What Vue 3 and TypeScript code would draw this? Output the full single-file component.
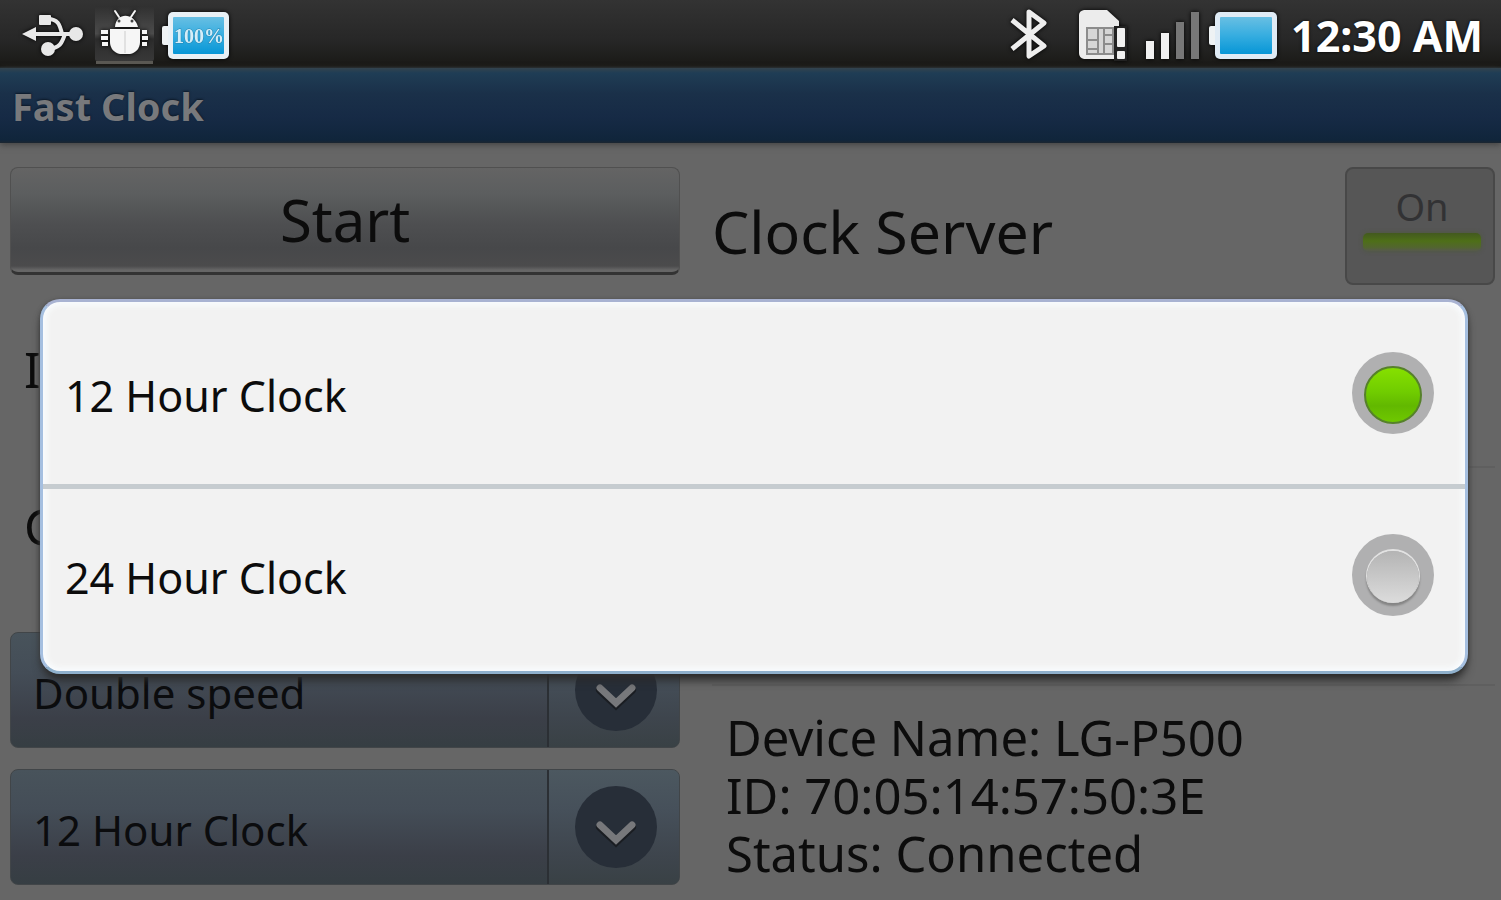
<script setup lang="ts">
import { ref } from 'vue'

type ClockFormat = '12' | '24'

interface FormatOption {
  value: ClockFormat
  label: string
}

const formats: FormatOption[] = [
  { value: '12', label: '12 Hour Clock' },
  { value: '24', label: '24 Hour Clock' },
]

const details: string[] = [
  'Device Name: LG-P500',
  'ID: 70:05:14:57:50:3E',
  'Status: Connected',
]

const selected = ref<ClockFormat>('12')
const speed = ref('Double speed')
const serverOn = ref(true)
</script>

<template>
  <div class="screen">
    <header class="status-bar">
      <div class="status-group">
        <svg class="glow" width="64" height="56" viewBox="22 6 64 56" aria-hidden="true">
          <path d="M22 34 L36 27 V41 Z" fill="#e8e8e8" />
          <path d="M32 34 H74 M46 19 C58 18 60 25 62 34 M48 49 C61 48 62 42 65 34" fill="none" stroke="#e8e8e8" stroke-width="4" />
          <rect x="39" y="15" width="12" height="10" rx="1" fill="#e8e8e8" />
          <circle cx="76" cy="34" r="7" fill="#e8e8e8" />
          <circle cx="48" cy="49" r="7" fill="#e8e8e8" />
        </svg>
        <svg width="60" height="60" viewBox="94 6 60 60" aria-hidden="true">
          <defs>
            <linearGradient id="tile" x1="0" y1="0" x2="0" y2="1">
              <stop offset="0" stop-color="#303030" />
              <stop offset=".5" stop-color="#4c4c4c" />
              <stop offset=".6" stop-color="#2c2c2c" />
              <stop offset="1" stop-color="#383838" />
            </linearGradient>
          </defs>
          <rect x="95" y="8" width="59" height="55" rx="2" fill="url(#tile)" />
          <rect x="96" y="63" width="57" height="3" fill="#5b5954" />
          <g class="glow" fill="#f6f6f6">
            <path d="M115 13 L119 19 M135 13 L131 19" stroke="#f6f6f6" stroke-width="2" stroke-linecap="round" />
            <path d="M115 29 C116 14 134 14 138 29 Z" />
            <path d="M110 31 H140 V44 C140 50 136 55 130 56 H120 C114 55 110 50 110 44 Z" />
            <path d="M101 34 H108 M101 40 H108 M102 46 H108 M142 34 H147 M142 40 H148 M142 46 H147" stroke="#f6f6f6" stroke-width="4" />
          </g>
          <path d="M125 33 V55" stroke="#ccc" stroke-width="1" />
          <circle cx="119" cy="23" r="1.5" fill="#444" />
          <circle cx="132" cy="23" r="1.5" fill="#444" />
        </svg>
        <svg class="glow" width="68" height="56" viewBox="0 0 68 56" aria-hidden="true">
          <defs>
            <linearGradient id="cell" x1="0" y1="0" x2="0" y2="1">
              <stop offset="0" stop-color="#68bfe3" />
              <stop offset=".5" stop-color="#36ade0" />
              <stop offset="1" stop-color="#0796d6" />
            </linearGradient>
          </defs>
          <rect x="0" y="20" width="8" height="19" rx="2" fill="#eef2f4" />
          <rect x="6" y="6" width="61" height="47" rx="5" fill="#e8f0f5" />
          <rect x="11" y="11" width="51" height="37" rx="1" fill="url(#cell)" />
          <text x="37" y="37" class="cell-text" text-anchor="middle">100%</text>
        </svg>
      </div>
      <div class="status-group">
        <svg class="glow" width="60" height="56" viewBox="1010 6 60 56" aria-hidden="true">
          <path d="M1013 20 L1045 46 L1030 56 V12 L1045 23 L1013 49" fill="none" stroke="#eee" stroke-width="5" stroke-linejoin="round" />
        </svg>
        <svg class="glow" width="56" height="56" viewBox="1080 6 56 56" aria-hidden="true">
          <path d="M1085 10 H1108 L1120 21 V59 H1085 Q1080 58 1080 53 V15 Q1080 11 1085 10 Z" fill="#ececec" />
          <path d="M1088 28 H1114 V54 H1088 Z M1099 28 V54 M1105 28 V54 M1088 40 H1099 M1105 35 H1114 M1105 44 H1114 M1088 49 H1099" fill="#d6d6d6" stroke="#8c8c8c" stroke-width="2" />
          <rect x="1115" y="26" width="13" height="35" fill="#222" />
          <rect x="1118" y="28" width="8" height="19" rx="1" fill="#f0f0f0" />
          <rect x="1118" y="51" width="8" height="8" rx="1" fill="#f0f0f0" />
        </svg>
        <svg class="glow" width="54" height="56" viewBox="1146 6 54 56" aria-hidden="true">
          <path d="M1147 41 H1155 V59 H1147 Z M1162 33 H1170 V59 H1162 Z" fill="#f0f0f0" />
          <path d="M1177 22 H1185 V59 H1177 Z M1192 12 H1200 V59 H1192 Z" fill="#777" />
        </svg>
        <svg class="glow" width="68" height="56" viewBox="0 0 68 56" aria-hidden="true">
          <rect x="0" y="20" width="8" height="19" rx="2" fill="#eef2f4" />
          <rect x="6" y="6" width="62" height="47" rx="5" fill="#dfebf5" />
          <rect x="11" y="11" width="52" height="37" rx="1" fill="url(#cell)" />
        </svg>
        <time class="time">12:30 AM</time>
      </div>
    </header>

    <div class="title-bar"><h1>Fast Clock</h1></div>

    <main class="content">
      <section class="controls">
        <button type="button" class="start">Start</button>
        <div class="fields">
          <p>I</p>
          <p>C</p>
        </div>
        <div class="spinner">
          <select v-model="speed" aria-label="Speed">
            <option>Double speed</option>
          </select>
          <span class="arrow">
            <svg width="83" height="83" viewBox="0 0 83 83" aria-hidden="true">
              <circle cx="41" cy="41" r="41" fill="#272e38" />
              <path d="M25 41 L41 56 L57 41" fill="none" stroke="#1a1d22" stroke-width="8" stroke-linecap="round" />
              <path d="M25 39 L41 54 L57 39" fill="none" stroke="#77787b" stroke-width="7" stroke-linecap="round" />
            </svg>
          </span>
        </div>
        <div class="spinner">
          <select v-model="selected" aria-label="Clock format">
            <option v-for="f in formats" :key="f.value" :value="f.value">{{ f.label }}</option>
          </select>
          <span class="arrow">
            <svg width="83" height="83" viewBox="0 0 83 83" aria-hidden="true">
              <circle cx="41" cy="41" r="41" fill="#272e38" />
              <path d="M25 41 L41 56 L57 41" fill="none" stroke="#1a1d22" stroke-width="8" stroke-linecap="round" />
              <path d="M25 39 L41 54 L57 39" fill="none" stroke="#77787b" stroke-width="7" stroke-linecap="round" />
            </svg>
          </span>
        </div>
      </section>

      <section class="server">
        <div class="server-head">
          <h2>Clock Server</h2>
          <button type="button" class="toggle" :aria-pressed="serverOn" @click="serverOn = !serverOn">
            <span>On</span>
            <i class="led"></i>
          </button>
        </div>
        <hr class="first" />
        <hr class="second" />
        <ul class="details">
          <li v-for="d in details" :key="d">{{ d }}</li>
        </ul>
      </section>
    </main>

    <div class="overlay">
      <div class="dialog" role="dialog" aria-label="Clock format">
        <label v-for="f in formats" :key="f.value" class="choice">
          <span>{{ f.label }}</span>
          <input v-model="selected" type="radio" name="format" :value="f.value" />
        </label>
      </div>
    </div>
  </div>
</template>

<style>
body {
  margin: 0;
  background: #666;
}
</style>

<style scoped>
.screen {
  position: relative;
  display: flex;
  flex-direction: column;
  min-height: 100vh;
  overflow: hidden;
  background: #666;
  color: #0c0c0c;
  font-family: "Noto Sans", "Open Sans", sans-serif;
}
.screen * {
  box-sizing: border-box;
}
h1, h2, p, ul {
  margin: 0;
  padding: 0;
  font-weight: 400;
}
button, select {
  margin: 0;
  font-family: inherit;
  color: inherit;
}
svg {
  display: block;
}
.glow {
  filter: drop-shadow(0 0 2px #000);
}

.status-bar {
  display: flex;
  justify-content: space-between;
  height: 68px;
  padding: 0 18px 0 22px;
  background: linear-gradient(#333 0, #272727 40px, #1a1916 66px, #222a2e 68px);
}
.status-group {
  display: flex;
  align-items: center;
  gap: 8px;
}
.status-group + .status-group {
  gap: 10px;
}
.cell-text {
  fill: #d4edf8;
  stroke: #2387b4;
  stroke-width: 1px;
  paint-order: stroke;
  font-family: "Liberation Serif", serif;
  font-size: 20px;
  font-weight: 700;
}
.time {
  padding: 4px 0 0 4px;
  color: #fff;
  font-size: 43px;
  font-weight: 700;
  line-height: 56px;
  text-shadow: 0 0 3px #000;
}

.title-bar {
  display: flex;
  align-items: center;
  height: 75px;
  padding: 0 12px;
  background: linear-gradient(#34434d 0, #1f3d55 5px, #1a3049 26px, #162a45 50px, #10253b 72px, #1c2630 75px);
  box-shadow: 0 2px 6px #444;
}
h1 {
  color: #78797c;
  font-size: 38px;
  font-weight: 700;
  line-height: 52px;
  text-shadow: 0 -1px 2px #0c1826;
}

.content {
  display: grid;
  grid-template-columns: 670fr 783fr;
  gap: 32px;
  padding: 24px 6px 15px 10px;
}
.start {
  width: 100%;
  height: 108px;
  padding: 0;
  border: 1px solid #505050;
  border-bottom: 3px solid #333;
  border-radius: 8px;
  background: linear-gradient(#646464 0, #5c5e5f 25px, #4e4f51 55px, #47484a 80px, #4b4b4c 98px, #666 102px);
  font-size: 58px;
  line-height: 80px;
}
.fields {
  padding: 16px 0 27px 14px;
}
.fields p {
  height: 157px;
  font-size: 49px;
  line-height: 157px;
}
.spinner {
  position: relative;
  height: 116px;
}
.spinner + .spinner {
  margin-top: 21px;
}
.spinner select {
  width: 100%;
  height: 100%;
  padding: 4px 132px 0 22px;
  appearance: none;
  border: 1px solid #414548;
  border-radius: 8px;
  background: linear-gradient(#48535b, #444d57 35%, #3b3f48 75%, #363e43);
  color: #0b0c0e;
  font-size: 42px;
}
.arrow {
  position: absolute;
  inset: 1px 1px 1px auto;
  display: grid;
  place-items: center;
  width: 132px;
  padding-left: 4px;
  border-left: 2px solid #2b2f34;
  border-radius: 0 7px 7px 0;
  background: linear-gradient(#4c5860, #46505a 35%, #3e454d 75%, #394145);
  pointer-events: none;
}

.server-head {
  display: flex;
  justify-content: space-between;
  align-items: center;
  height: 118px;
}
h2 {
  padding-top: 10px;
  font-size: 59px;
  line-height: 80px;
}
.toggle {
  display: flex;
  flex-direction: column;
  align-items: center;
  width: 150px;
  height: 118px;
  padding: 10px 12px 10px 16px;
  border: 2px solid #484848;
  border-radius: 8px;
  background: #565656;
  color: #323234;
  font-size: 38px;
  line-height: 54px;
}
.led {
  width: 118px;
  height: 18px;
  border-radius: 5px;
  background: linear-gradient(#43591f, #4e6f18 45%, #52652f 80%, #56594c);
  box-shadow: 0 0 4px #4e5a3a;
}
hr {
  height: 2px;
  margin: 0;
  border: 0;
  background: #5f5f5f;
}
.first {
  margin-top: 181px;
}
.second {
  margin-top: 216px;
}
.details {
  padding: 22px 0 0 14px;
  list-style: none;
  font-size: 49px;
  line-height: 58px;
}

.overlay {
  position: absolute;
  inset: 73px 0 0;
  display: flex;
  align-items: center;
  padding: 0 33px 0 40px;
}
.dialog {
  flex: 1;
  padding-bottom: 5px;
  border: 3px solid #a5bfe0;
  border-top-color: #a9b3d2;
  border-bottom-color: #8fb0cc;
  border-radius: 20px;
  background: #f2f2f2;
  box-shadow: 0 8px 10px -2px #2a2a2a, 0 1px 4px #444, inset 0 0 6px 3px #fafdff;
}
.choice {
  display: flex;
  justify-content: space-between;
  align-items: center;
  height: 182px;
  padding: 0 31px 0 22px;
  font-size: 43px;
  line-height: 60px;
}
.choice + .choice {
  background: linear-gradient(#c6ccd0 5px, transparent 5px);
}
.choice span {
  padding-top: 6px;
}
.choice input {
  display: grid;
  place-items: center;
  width: 82px;
  height: 82px;
  margin: 0;
  appearance: none;
  border-radius: 50%;
  background: #b0b0b1;
}
.choice input::before {
  content: "";
  width: 52px;
  height: 52px;
  margin-top: 4px;
  border-radius: 50%;
  background: linear-gradient(#b4b4b4, #dcdcdc);
  box-shadow: 0 -1px 0 1px #e2e2e2, 0 2px 2px 1px #858585;
}
.choice input:checked::before {
  width: 54px;
  height: 54px;
  border: 2px solid #56812b;
  background: linear-gradient(#86e000, #70cc00 45%, #62b800 70%, #6fc800);
  box-shadow: none;
}
</style>
